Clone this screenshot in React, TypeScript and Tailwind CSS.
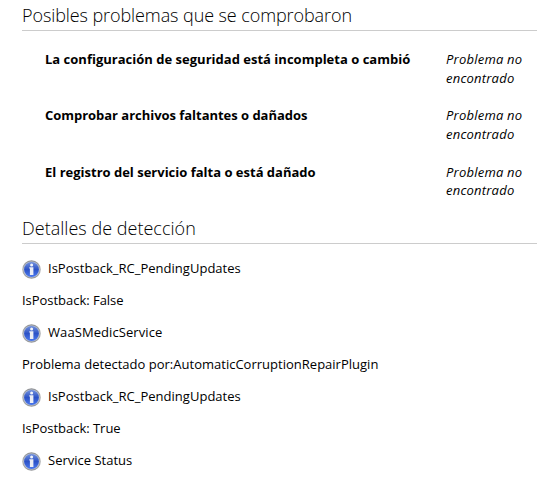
interface Check {
  title: string
  titleClass: string
  rowClass: string
  noteClass: string
}

interface Detail {
  text: string
  icon?: boolean
  textClass: string
}

const checks: Check[] = [
  { title: 'La configuración de seguridad está incompleta o cambió', titleClass: 'tracking-[0.01px]', rowClass: 'h-14', noteClass: 'leading-[19px]' },
  { title: 'Comprobar archivos faltantes o dañados', titleClass: 'tracking-[-0.03px]', rowClass: 'h-[57px]', noteClass: 'leading-[19px]' },
  { title: 'El registro del servicio falta o está dañado', titleClass: 'tracking-[0px]', rowClass: 'h-[46px]', noteClass: 'leading-[18px]' },
]

const details: Detail[] = [
  { text: 'IsPostback_RC_PendingUpdates', icon: true, textClass: 'tracking-[0.02px]' },
  { text: 'IsPostback: False', textClass: 'tracking-[-0.03px]' },
  { text: 'WaaSMedicService', icon: true, textClass: 'tracking-[0.08px]' },
  { text: 'Problema detectado por:AutomaticCorruptionRepairPlugin', textClass: 'tracking-[0.01px]' },
  { text: 'IsPostback_RC_PendingUpdates', icon: true, textClass: 'tracking-[0.02px]' },
  { text: 'IsPostback: True', textClass: 'tracking-[-0.03px]' },
  { text: 'Service Status', icon: true, textClass: 'tracking-[0px]' },
]

function InfoIcon() {
  return (
    <svg className="mt-[8px] mr-[7px] size-[19px] shrink-0" viewBox="0 0 19 19" aria-hidden="true">
      <defs>
        <linearGradient id="rim" x1="0" y1="0" x2="0" y2="1">
          <stop offset="0" stopColor="#8d8f92" />
          <stop offset="0.5" stopColor="#b0b3b6" />
          <stop offset="1" stopColor="#929497" />
        </linearGradient>
        <linearGradient id="ball" x1="0" y1="0" x2="0" y2="1">
          <stop offset="0" stopColor="#7291dc" />
          <stop offset="0.5" stopColor="#2c52c6" />
          <stop offset="1" stopColor="#4a78ee" />
        </linearGradient>
      </defs>
      <circle cx="9.5" cy="9.5" r="9.3" fill="url(#rim)" />
      <circle cx="9.5" cy="9.5" r="8" fill="#b9c3da" />
      <circle cx="9.5" cy="9.5" r="7.4" fill="url(#ball)" />
      <circle cx="9.6" cy="5" r="1.5" fill="#f4f6fb" />
      <path d="M7.3 7.2h4.1v7.7H7.9V8.6h-.6z" fill="#eceef4" />
    </svg>
  )
}

function SectionTitle({ children, className }: { children: string; className: string }) {
  return (
    <h2 className={`border-b border-[#cccccc] text-[18px] font-[340] text-black ${className}`}>
      {children}
    </h2>
  )
}

export default function App() {
  return (
    <main className="h-[498px] w-[537px] overflow-hidden bg-white pl-[22px] font-['Open_Sans','Noto_Sans',sans-serif] text-[13px] whitespace-nowrap text-black">
      <section className="pt-px">
        <SectionTitle className="pb-px leading-[28px] tracking-[-0.09px]">Posibles problemas que se comprobaron</SectionTitle>
        <div className="h-[182px] pt-[19px] pl-[23px]">
          {checks.map(check => (
            <div key={check.title} className={`flex items-start ${check.rowClass}`}>
              <div className={`w-[401px] font-bold leading-[19px] ${check.titleClass}`}>{check.title}</div>
              <div className={`italic tracking-[0.22px] ${check.noteClass}`}>
                Problema no<br />encontrado
              </div>
            </div>
          ))}
        </div>
      </section>

      <section>
        <SectionTitle className="pt-px pb-px leading-[28px] tracking-[0.02px]">Detalles de detección</SectionTitle>
        <div className="pt-[8px]">
          {details.map((detail, i) => (
            <div key={i} className="flex h-8 items-start">
              {detail.icon && <InfoIcon />}
              <span className={`leading-[32px] ${detail.textClass}`}>{detail.text}</span>
            </div>
          ))}
        </div>
      </section>
    </main>
  )
}
